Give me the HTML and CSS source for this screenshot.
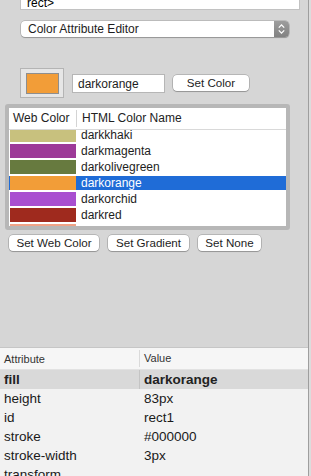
FILE: index.html
```html
<!DOCTYPE html>
<html lang="en">
<head>
  <meta charset="UTF-8">
  <title>Color Attribute Editor</title>
  <link rel="stylesheet" href="styles.css">
</head>
<body>

  <div class="window">
    <div class="pane">

      <!-- top: the editor -->
      <div class="editor">
        <div class="source"><span>rect&gt;</span></div>

        <div class="select">
          <span class="select-label">Color Attribute Editor</span>
          <span class="stepper">
            <svg width="15" height="16" viewBox="0 0 15 16">
              <path d="M4.8 6.6 L7.5 3.9 L10.2 6.6" fill="none" stroke="#fff" stroke-width="1.3"/>
              <path d="M4.8 9.4 L7.5 12.1 L10.2 9.4" fill="none" stroke="#fff" stroke-width="1.3"/>
            </svg>
          </span>
        </div>

        <div class="picker">
          <div class="well"><div class="well-color"></div></div>
          <div class="field">darkorange</div>
          <div class="btn btn-set">Set Color</div>
        </div>

        <div class="colors">
          <div class="colors-head">
            <div class="col-swatch">Web Color</div>
            <div class="col-name">HTML Color Name</div>
          </div>
          <div class="rows">
            <div class="row"><span class="swatch" style="background:#c8c17e"></span><span class="name">darkkhaki</span></div>
            <div class="row"><span class="swatch" style="background:#9d3a98"></span><span class="name">darkmagenta</span></div>
            <div class="row"><span class="swatch" style="background:#677a3f"></span><span class="name">darkolivegreen</span></div>
            <div class="row selected"><span class="swatch" style="background:#f29d38"></span><span class="name">darkorange</span></div>
            <div class="row"><span class="swatch" style="background:#a94fd0"></span><span class="name">darkorchid</span></div>
            <div class="row"><span class="swatch" style="background:#9f2a1e"></span><span class="name">darkred</span></div>
            <div class="row"><span class="swatch" style="background:#f0a387"></span><span class="name">darksalmon</span></div>
          </div>
        </div>

        <div class="actions">
          <div class="btn btn-web">Set Web Color</div>
          <div class="btn btn-grad">Set Gradient</div>
          <div class="btn btn-none">Set None</div>
        </div>
      </div>

      <!-- bottom: attribute table -->
      <div class="attrs">
        <div class="attrs-head">
          <div class="a-key">Attribute</div>
          <div class="a-val">Value</div>
        </div>
        <div class="a-row current"><div class="a-key">fill</div><div class="a-val">darkorange</div></div>
        <div class="a-row"><div class="a-key">height</div><div class="a-val">83px</div></div>
        <div class="a-row"><div class="a-key">id</div><div class="a-val">rect1</div></div>
        <div class="a-row"><div class="a-key">stroke</div><div class="a-val">#000000</div></div>
        <div class="a-row"><div class="a-key">stroke-width</div><div class="a-val">3px</div></div>
        <div class="a-row"><div class="a-key">transform</div><div class="a-val"></div></div>
      </div>

    </div>
    <div class="edge"></div>
  </div>

</body>
</html>
```

FILE: styles.css
```css
body {
  margin: 0;
  background-color: #d6d6d6;
  font-family: 'Liberation Sans', Arial, sans-serif;
  font-size: 12px;
  color: #1d1d1d;
}

.window {
  display: flex;
  height: 476px;
  overflow: hidden;
}

.pane {
  width: 308px;
  border-right: 1px solid #9e9e9e;
  display: flex;
  flex-direction: column;
}

.edge {
  flex: 1;
  background-color: #dcdcdc;
}

.editor {
  flex: 1;
  display: flex;
  flex-direction: column;
  align-items: flex-start;
}

/* scrolled-off source view */
.source {
  width: 266px;
  height: 9px;
  margin-left: 20px;
  padding: 0 6px;
  background: #fff;
  border: 1px solid #c2c2c2;
  border-top: none;
  display: flex;
  align-items: flex-end;
  overflow: hidden;
  line-height: 12px;
  color: #000;
}

.select {
  width: 268px;
  height: 16px;
  margin: 11px 0 0 21px;
  background: #fff;
  border-radius: 4px;
  box-shadow: 0 0 0 0.5px rgba(0,0,0,0.25), 0 1px 1px rgba(0,0,0,0.2);
  display: flex;
  align-items: center;
  justify-content: space-between;
}

.select-label {
  padding-left: 7px;
  line-height: 16px;
}

.stepper {
  width: 15px;
  height: 16px;
  border-radius: 0 4px 4px 0;
  background: linear-gradient(#9d9d9d, #828282);
  display: flex;
}

.picker {
  display: flex;
  align-items: center;
  gap: 8px;
  margin: 31px 0 0 20px;
}

.well {
  width: 42px;
  height: 28px;
  background: #e6e6e6;
  border: 1px solid #b4b4b4;
  display: flex;
  align-items: center;
  justify-content: center;
}

.well-color {
  width: 31px;
  height: 19px;
  background: #f29d38;
  border: 1px solid #8e8e8e;
}

.field {
  width: 86px;
  height: 17px;
  padding-left: 5px;
  background: #fff;
  border: 1px solid #b6b6b6;
  line-height: 18px;
}

.btn {
  height: 16px;
  box-sizing: border-box;
  background: #fff;
  border-radius: 4px;
  box-shadow: 0 0 0 0.5px rgba(0,0,0,0.3), 0 1px 1px rgba(0,0,0,0.18);
  font-size: 11.6px;
  line-height: 16px;
  text-align: center;
}

.btn-set { width: 76px; }

/* colour list */
.colors {
  width: 277px;
  height: 118px;
  margin: 6px 0 0 5px;
  border: 4px solid #b7b7b7;
  border-radius: 3px;
  background: #fff;
  display: flex;
  flex-direction: column;
}

.colors-head {
  height: 21px;
  border-bottom: 1px solid #d9d9d9;
  display: flex;
  align-items: center;
  color: #222;
}

.col-swatch {
  width: 63px;
  padding-left: 4px;
  border-right: 1px solid #d4d4d4;
  line-height: 17px;
}

.col-name {
  padding-left: 5px;
  line-height: 17px;
}

.rows {
  flex: 1;
  overflow: hidden;
}

.row {
  height: 14px;
  margin-bottom: 2px;
  display: flex;
  align-items: center;
}

.row:first-child {
  margin-top: -2px;
}

.swatch {
  width: 66px;
  height: 14px;
  margin-left: 1px;
}

.name {
  padding-left: 5px;
  line-height: 14px;
}

.row.selected {
  background: #1f6cd7;
  color: #fff;
}

.actions {
  display: flex;
  gap: 9px;
  margin: 5px 0 0 9px;
}

.btn-web { width: 90px; }
.btn-grad { width: 81px; }
.btn-none { width: 63px; }

/* attribute table */
.attrs {
  flex: 0 0 128px;
  min-height: 0;
  overflow: hidden;
  border-top: 1px solid #c6c6c6;
  background: #f2f2f2;
  font-size: 13.5px;
  color: #1a1a1a;
}

.attrs-head {
  height: 21px;
  border-bottom: 1px solid #e2e2e2;
  background: #f6f6f6;
  display: flex;
  align-items: center;
  font-size: 11px;
  color: #333;
}

.a-key {
  width: 135px;
  padding-left: 4px;
}

.a-val {
  flex: 1;
  padding-left: 4px;
  border-left: 1px solid transparent;
}

.attrs-head .a-val {
  border-left-color: #dadada;
  line-height: 17px;
}

.a-row {
  height: 19px;
  display: flex;
  align-items: center;
  line-height: 19px;
}

.a-row.current {
  background: #d9d9d9;
  font-weight: bold;
  color: #222;
}

.a-row.current .a-val {
  border-left-color: #c4c4c4;
}
```
